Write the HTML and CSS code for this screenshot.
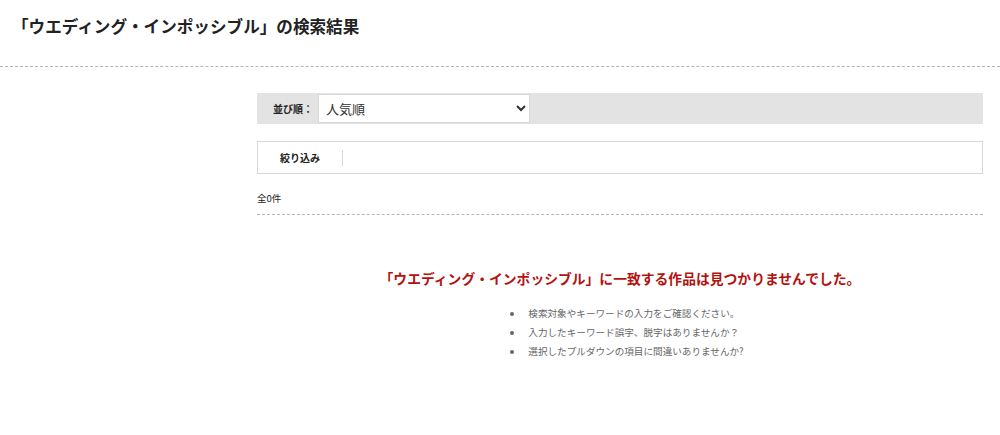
FILE: index.html
```html
<!DOCTYPE html>
<html lang="ja">
<head>
    <meta charset="UTF-8">
    <meta name="viewport" content="width=device-width, initial-scale=1.0">
    <title>「ウエディング・インポッシブル」の検索結果</title>
    <link rel="stylesheet" href="styles.css">
</head>
<body>
    <header class="page-header">
        <h1>「ウエディング・インポッシブル」の検索結果</h1>
    </header>

    <main class="search-main">
        <div class="sort-bar">
            <label for="sort" class="sort-label">並び順：</label>
            <select id="sort" class="sort-select">
                <option>人気順</option>
                <option>新着順</option>
                <option>価格の安い順</option>
            </select>
        </div>

        <div class="filter-box">
            <span class="filter-title">絞り込み</span>
            <span class="filter-sep"></span>
        </div>

        <p class="result-count">全0件</p>

        <div class="no-result">
            <p class="no-result-title">「ウエディング・インポッシブル」に一致する作品は見つかりませんでした。</p>
            <ul class="no-result-list">
                <li>検索対象やキーワードの入力をご確認ください。</li>
                <li>入力したキーワード誤字、脱字はありませんか？</li>
                <li>選択したプルダウンの項目に間違いありませんか?</li>
            </ul>
        </div>
    </main>
</body>
</html>
```

FILE: styles.css
```css
:root {
    --text: #222;
    --text-light: #666;
    --grey: #e3e3e3;
    --border: #d8d8d8;
    --dash: #b5b5b5;
    --red: #b3120f;
    --white: #ffffff;
}

body {
    font-family: "Noto Sans CJK JP", "Noto Sans", sans-serif;
    color: var(--text);
    background: var(--white);
    margin: 0;
}

.page-header {
    height: 66px;
    padding-left: 12px;
    border-bottom: 1px dashed var(--dash);
    display: flex;
    align-items: flex-start;
}

.page-header h1 {
    font-size: 16.6px;
    font-weight: bold;
    margin: 16px 0 0;
    line-height: 20px;
}

.search-main {
    width: 726px;
    margin-left: 257px;
    padding-top: 26px;
}

.sort-bar {
    height: 31px;
    background: var(--grey);
    display: flex;
    align-items: center;
}

.sort-label {
    font-size: 10px;
    font-weight: bold;
    padding-left: 16px;
    width: 45px;
}

.sort-select {
    width: 212px;
    height: 29px;
    border: 1px solid var(--border);
    border-radius: 0;
    background: var(--white);
    font-family: inherit;
    font-size: 13px;
    color: #333;
    padding-left: 3px;
}

.filter-box {
    margin-top: 17px;
    height: 31px;
    border: 1px solid var(--border);
    display: flex;
    align-items: center;
}

.filter-title {
    width: 84px;
    text-align: center;
    font-size: 10px;
    font-weight: bold;
}

.filter-sep {
    width: 1px;
    height: 16px;
    background: var(--border);
}

.result-count {
    margin: 17px 0 0;
    font-size: 9.5px;
    line-height: 14px;
    padding-bottom: 9px;
    border-bottom: 1px dashed var(--dash);
}

.no-result {
    text-align: center;
    padding-top: 53px;
}

.no-result-title {
    margin: 0;
    color: var(--red);
    font-size: 13.8px;
    font-weight: bold;
    line-height: 20px;
}

.no-result-list {
    display: inline-block;
    text-align: left;
    margin: 16px 0 0 10px;
    padding-left: 18px;
    font-size: 9.6px;
    line-height: 19px;
    color: var(--text-light);
}

.no-result-list li {
    padding-left: 4px;
}
```
